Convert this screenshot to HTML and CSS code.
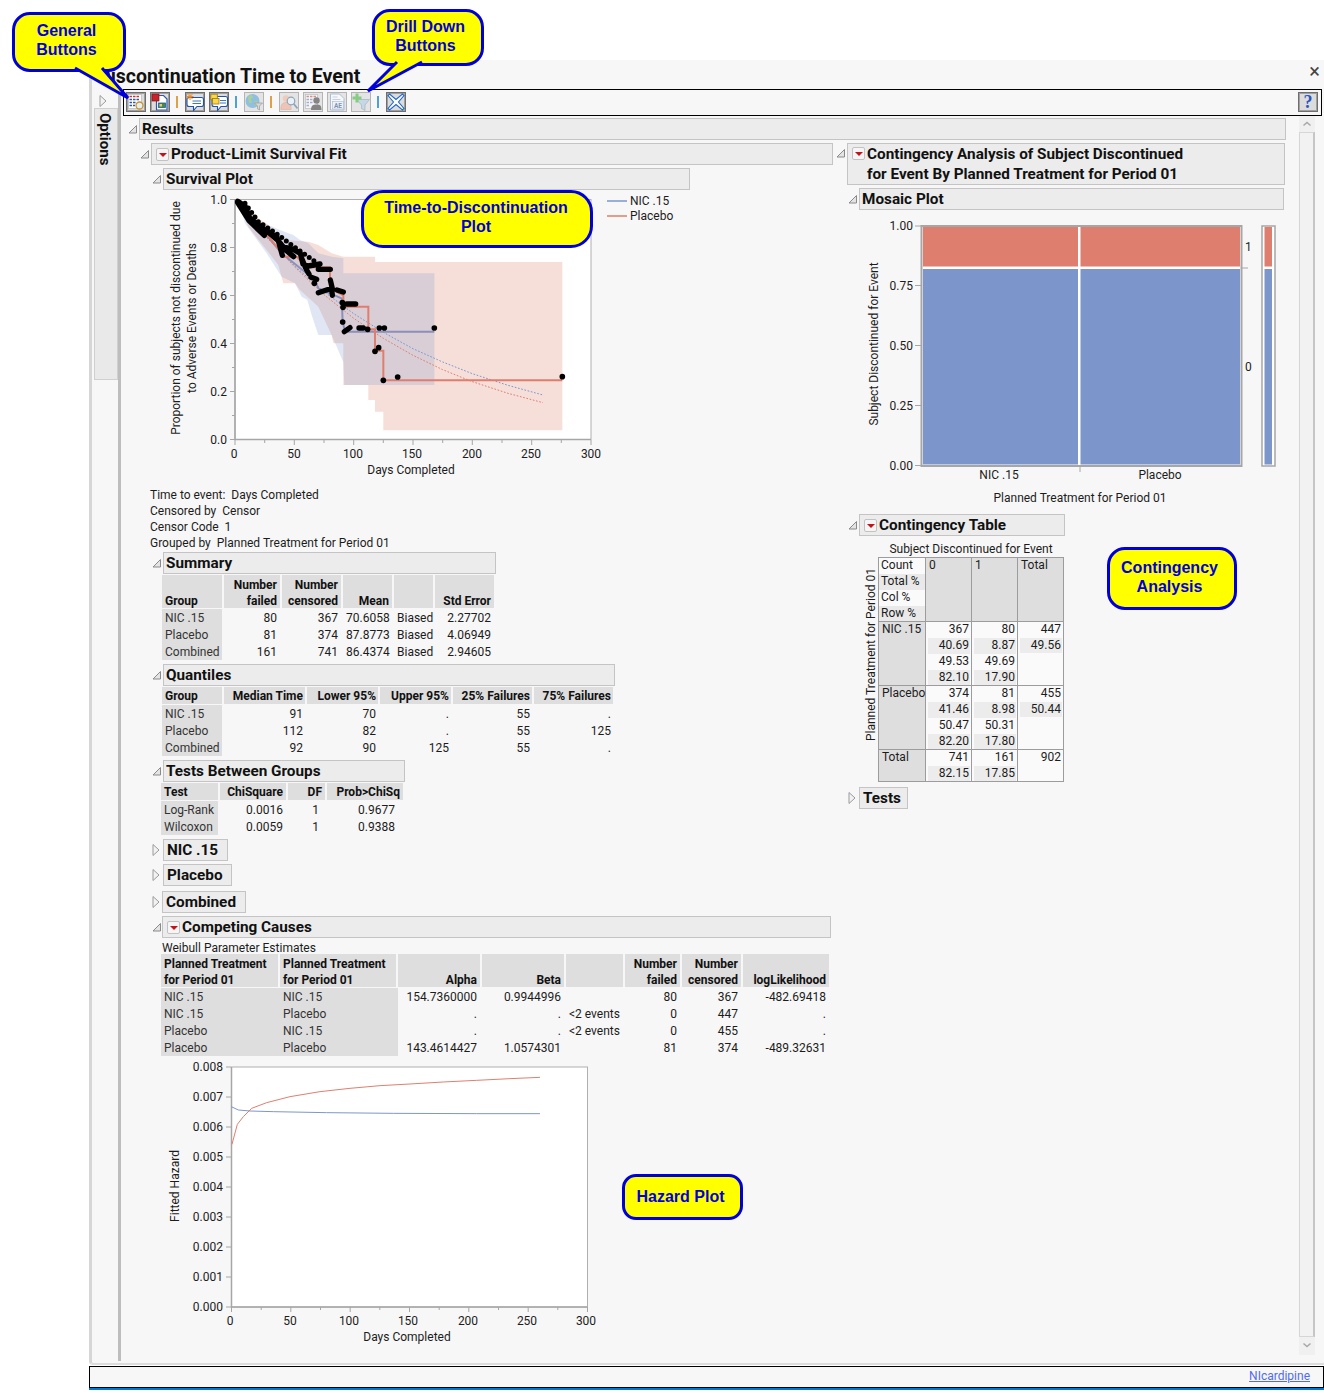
FILE: index.html
```html
<!DOCTYPE html>
<html lang="en">
<head>
<meta charset="utf-8">
<title>Discontinuation Time to Event</title>
<link rel="stylesheet" href="styles.css">
</head>
<body>
<svg class="defs" width="0" height="0" aria-hidden="true">
  <symbol id="tri-open" viewBox="0 0 10 10"><path d="M9.500 1.500V9H2Z" fill="#e4e4e4" stroke="#8a8a8a"/></symbol>
  <symbol id="tri-closed" viewBox="0 0 10 14"><path d="M2 1.500L8 7L2 12.500Z" fill="#f2f2f2" stroke="#9a9a9a"/></symbol>
</svg>
<div class="window">
  <div class="titlebar">
    <h1 class="title">Discontinuation Time to Event</h1>
    <span class="close">&#215;</span>
  </div>
  <div class="frame">
    <aside class="sidebar">
      <svg class="side-tri"><use href="#tri-closed"/></svg>
      <div class="options"><span>Options</span></div>
    </aside>
    <main class="main">
      <div class="toolbar">
        <button class="tb"><svg viewBox="0 0 18 18"><rect x="1.500" y="1.500" width="13" height="14" fill="#fff" stroke="#b0b0b0" stroke-width=".6"/><path d="M2.500 3.500h2.500M6 3.500h2.500M9.500 3.500h2.500" stroke="#c33" stroke-width="1.400"/><path d="M2.500 6.500h2.500M6 6.500h2.500M9.500 6.500h2.500M2.500 9.500h2.500M6 9.500h2.500M2.500 12.500h2.500M6 12.500h2" stroke="#2f58aa" stroke-width="1.600"/><circle cx="12.500" cy="12.500" r="3.500" fill="#dff0f7" stroke="#d08f25" stroke-width="1.300"/></svg></button>
        <button class="tb"><svg viewBox="0 0 18 18"><path d="M5.500 2.500h7l3.500 3.500v11H5.500z" fill="#fff" stroke="#2f58b0" stroke-width="1.200"/><rect x="1" y="1" width="7" height="7" fill="#c8242a" stroke="#7c1518" stroke-width=".7"/><rect x="7.500" y="10" width="7" height="4.500" fill="#3f8f44" stroke="#2a5a9c" stroke-width=".8"/><rect x="8.500" y="11" width="2.500" height="2.500" fill="#f0d24a"/></svg></button>
        <span class="sep sep-o"></span>
        <button class="tb"><svg viewBox="0 0 18 18"><path d="M3 4.500h12.500a2 2 0 0 1 2 2v5a2 2 0 0 1-2 2H11l-3.500 4v-4H3a2 2 0 0 1-2-2v-5a2 2 0 0 1 2-2z" fill="#fff" stroke="#1f54ad" stroke-width="1.100"/><path d="M6.500 8h8.500M6.500 10.500h8.500" stroke="#3f74c6" stroke-width="1.100"/><path d="M4 0v7M.5 3.500h7M1.500 1l5 5M6.500 1l-5 5" stroke="#f08a1a"/></svg></button>
        <button class="tb"><svg viewBox="0 0 18 18"><path d="M4 3.500h11.500a2 2 0 0 1 2 2v6a2 2 0 0 1-2 2H11l-3.500 4v-4H4a2 2 0 0 1-2-2v-6a2 2 0 0 1 2-2z" fill="#fff" stroke="#1f54ad" stroke-width="1.100"/><path d="M10 7.500h6M10 10h6" stroke="#3f74c6" stroke-width="1.100"/><rect x=".8" y="1.200" width="6.500" height="5.500" fill="#f8d84a" stroke="#9c7a10" stroke-width=".8"/><rect x="2.500" y="5.500" width="6.500" height="5.500" fill="#f8d84a" stroke="#9c7a10" stroke-width=".8"/></svg></button>
        <span class="sep sep-b"></span>
        <button class="tb off"><svg viewBox="0 0 18 18"><circle cx="7.500" cy="8" r="7" fill="#8fbfe2"/><path d="M3 4l3-2.500 2.500 2.500-2.500 2 1 3.500-3 1zM9 8.500l3-1 1 3-3 2.500z" fill="#a7d09a"/><path d="M9.500 10h8l-3 3v4l-2-1.200V13z" fill="#d8d8d8" stroke="#9a9a9a" stroke-width=".7"/></svg></button>
        <span class="sep sep-o"></span>
        <button class="tb off"><svg viewBox="0 0 18 18"><circle cx="6" cy="5.500" r="3.200" fill="#f0cbb9"/><path d="M.8 16.500c0-5.500 2-7 5.200-7s5.200 1.500 5.200 7z" fill="#eec4b6" stroke="#d8a898" stroke-width=".5"/><circle cx="11" cy="8" r="3.800" fill="#e8f1f8" stroke="#8ea3b8" stroke-width="1.200"/><path d="M13.700 10.700L17.500 15.500" stroke="#8ea3b8" stroke-width="1.700"/></svg></button>
        <button class="tb off"><svg viewBox="0 0 18 18"><rect x="1.500" y="1.500" width="12" height="14" fill="#f5f5f5" stroke="#b5b5b5" stroke-width=".6"/><path d="M2.500 3.500h2.500M6 3.500h2.500M9.500 3.500h2.500" stroke="#d49090" stroke-width="1.400"/><path d="M2.500 6.500h2.500M6 6.500h2.500M2.500 9.500h2.500M6 9.500h2.500M2.500 12.500h2.500" stroke="#a0b0cc" stroke-width="1.600"/><circle cx="12.500" cy="7.500" r="3.200" fill="#858585"/><path d="M7 17c0-4.500 2-5.500 5.500-5.500s5 1 5 5.500z" fill="#858585"/></svg></button>
        <button class="tb off"><svg viewBox="0 0 18 18"><path d="M2.500 1h9l4.500 4.500V17h-13.500z" fill="#f8f8f8" stroke="#a4b8d3" stroke-width=".9"/><path d="M4.500 4h5M4.500 6.500h8" stroke="#c5d0e1"/><rect x="4.500" y="8.500" width="11" height="7.500" fill="#eef2f7" stroke="#a4b8d3" stroke-width=".6"/><text class="ico-txt" x="10" y="14.500">AE</text></svg></button>
        <button class="tb off"><svg viewBox="0 0 18 18"><path d="M4.500 6.500h13l-4.500 5.500v5.500l-3.500-2V12z" fill="#c6d7e5" stroke="#a4b4c2" stroke-width=".7"/><path d="M5 .5v9M.5 5h9" stroke="#86cc82" stroke-width="3"/></svg></button>
        <span class="sep sep-b"></span>
        <button class="tb"><svg viewBox="0 0 18 18"><path d="M2.500 1l6.500 5.500L15.500 1 17 2.500l-5.500 6.500 5.500 6.500-1.500 1.500L9 11.500 2.500 17 1 15.500 6.500 9 1 2.500z" fill="#fff" stroke="#2268cc" stroke-width="1.100"/></svg></button>
        <button class="tb help">?</button>
      </div>
      <div class="scroller">
        <div class="tree">
          <div class="orow"><svg class="tri"><use href="#tri-open"/></svg><div class="ohead ohead-results">Results</div></div>
          <div class="cols">
            <section class="col-left">
              <div class="orow"><svg class="tri"><use href="#tri-open"/></svg><div class="ohead ohead-pl"><span class="menu"></span>Product-Limit Survival Fit</div></div>
              <div class="ind">
                <div class="orow r-surv"><svg class="tri"><use href="#tri-open"/></svg><div class="ohead w-surv">Survival Plot</div></div>
                <svg class="plot plot-surv" width="540" height="292" viewBox="153 190 540 292">
                  <rect x="235" y="199.500" width="356" height="240" fill="#fff" stroke="#b0b0b0"/>
                  <path d="M235 199.500V439.500H591" fill="none" stroke="#a6a6a6" stroke-width="1.500"/>
                  <path class="tick" d="M230 199.500h5M230 247.500h5M230 295.500h5M230 343.500h5M230 391.500h5M230 439.500h5M232 223.500h3M232 271.500h3M232 319.500h3M232 367.500h3M232 415.500h3M235 440v5M294.300 440v5M353.700 440v5M413 440v5M472.300 440v5M531.700 440v5M591 440v5M264.700 440v3M324 440v3M383.300 440v3M442.700 440v3M502 440v3M561.300 440v3"/>
                  <g transform="translate(225 190) scale(.33333)">
                    <path class="band-r" d="M40 30L100 85L130 105L175 150L250 155L280 165L320 190L355 200H450V216H1012V721H475V665H450V630H430V585H355V460H325L320 435L280 350L225 300L210 280H175L160 225L125 180L70 110Z"/>
                    <path class="band-b" d="M40 30L100 95L130 105L165 120L205 135L225 150L250 160L280 190L320 200L355 205V250H628V585H358L355 517L320 435H280L260 375L247 330L230 320L210 280L170 260L125 190L60 100Z"/>
                    <polyline class="fit fit-b" points="30,28 119,136 208,227 297,305 386,371 475,427 564,476 653,516 742,551 849,586 954,615"/>
                    <polyline class="fit fit-r" points="30,28 119,134 208,230 297,314 386,385 475,445 564,496 653,539 742,575 849,610 954,638"/>
                    <path class="km km-b" d="M40 32L170 190L270 270L280 295L350 325L353 395L360 425H628"/>
                    <path class="km km-r" d="M40 32L180 200H215L245 232H315V265L325 300L355 316V350H430V418H450V482H475V571H1012"/>
                    <path class="dotline" d="M38 34L60 48L74 84L120 120L155 142L166 168L205 178L226 190L234 222L250 228L285 222M38 38L72 92L118 136M122 120L160 152L172 196M150 140L182 180L206 200M230 205L242 234M280 238H316M245 240L252 252M258 262L275 268M316 270L322 296M280 308L320 295L322 316M336 300L355 306M365 342H392M358 425L375 413M402 414H415"/>
                    <path class="dotbumps" d="M60 40L100 95L160 135L200 165L228 185L270 215"/>
                    <g class="pts">
                      <circle cx="268" cy="280"/><circle cx="352" cy="338"/><circle cx="354" cy="352"/><circle cx="353" cy="396"/><circle cx="428" cy="418"/><circle cx="463" cy="414"/><circle cx="478" cy="414"/><circle cx="628" cy="414"/><circle cx="450" cy="484"/><circle cx="461" cy="473"/><circle cx="475" cy="571"/><circle cx="518" cy="561"/><circle cx="1012" cy="560"/>
                    </g>
                  </g>
                  <g class="yl"><text x="227" y="203.500">1.0</text><text x="227" y="251.500">0.8</text><text x="227" y="299.500">0.6</text><text x="227" y="347.500">0.4</text><text x="227" y="395.500">0.2</text><text x="227" y="443.500">0.0</text></g>
                  <g class="xl"><text x="234" y="458">0</text><text x="294" y="458">50</text><text x="353" y="458">100</text><text x="412" y="458">150</text><text x="472" y="458">200</text><text x="531" y="458">250</text><text x="591" y="458">300</text><text x="411" y="474">Days Completed</text></g>
                  <text class="rot" transform="translate(180 318) rotate(-90)">Proportion of subjects not discontinued due</text>
                  <text class="rot" transform="translate(196 318) rotate(-90)">to Adverse Events or Deaths</text>
                  <path d="M607 201h20" stroke="#7c96cc" stroke-width="1.500"/><path d="M607 216h20" stroke="#de7e6e" stroke-width="1.500"/>
                  <text class="lg" x="630" y="205">NIC .15</text><text class="lg" x="630" y="220">Placebo</text>
                </svg>
                <div class="info">
                  <div>Time to event:&nbsp; Days Completed</div>
                  <div>Censored by&nbsp; Censor</div>
                  <div>Censor Code&nbsp; 1</div>
                  <div>Grouped by&nbsp; Planned Treatment for Period 01</div>
                </div>
                <div class="orow r-sum"><svg class="tri"><use href="#tri-open"/></svg><div class="ohead w-sum">Summary</div></div>
                <table class="rep t-sum">
                  <colgroup><col><col><col><col><col><col></colgroup>
                  <thead><tr><th class="l">Group</th><th>Number<br>failed</th><th>Number<br>censored</th><th>Mean</th><th></th><th>Std Error</th></tr></thead>
                  <tbody>
                    <tr><td class="lab">NIC .15</td><td>80</td><td>367</td><td>70.6058</td><td class="l">Biased</td><td>2.27702</td></tr>
                    <tr><td class="lab">Placebo</td><td>81</td><td>374</td><td>87.8773</td><td class="l">Biased</td><td>4.06949</td></tr>
                    <tr><td class="lab">Combined</td><td>161</td><td>741</td><td>86.4374</td><td class="l">Biased</td><td>2.94605</td></tr>
                  </tbody>
                </table>
                <div class="orow r-q"><svg class="tri"><use href="#tri-open"/></svg><div class="ohead w-q">Quantiles</div></div>
                <table class="rep t-q">
                  <colgroup><col><col><col><col><col><col></colgroup>
                  <thead><tr><th class="l">Group</th><th>Median Time</th><th>Lower 95%</th><th>Upper 95%</th><th>25% Failures</th><th>75% Failures</th></tr></thead>
                  <tbody>
                    <tr><td class="lab">NIC .15</td><td>91</td><td>70</td><td>.</td><td>55</td><td>.</td></tr>
                    <tr><td class="lab">Placebo</td><td>112</td><td>82</td><td>.</td><td>55</td><td>125</td></tr>
                    <tr><td class="lab">Combined</td><td>92</td><td>90</td><td>125</td><td>55</td><td>.</td></tr>
                  </tbody>
                </table>
                <div class="orow r-tbg"><svg class="tri"><use href="#tri-open"/></svg><div class="ohead w-tbg">Tests Between Groups</div></div>
                <table class="rep t-tbg">
                  <colgroup><col><col><col><col></colgroup>
                  <thead><tr><th class="l">Test</th><th>ChiSquare</th><th>DF</th><th>Prob&gt;ChiSq</th></tr></thead>
                  <tbody>
                    <tr><td class="lab">Log-Rank</td><td>0.0016</td><td class="c">1</td><td>0.9677</td></tr>
                    <tr><td class="lab">Wilcoxon</td><td>0.0059</td><td class="c">1</td><td>0.9388</td></tr>
                  </tbody>
                </table>
                <div class="orow r-nic"><svg class="tri tri-c"><use href="#tri-closed"/></svg><div class="ohead big w-nic">NIC .15</div></div>
                <div class="orow r-pla"><svg class="tri tri-c"><use href="#tri-closed"/></svg><div class="ohead big w-pla">Placebo</div></div>
                <div class="orow r-com"><svg class="tri tri-c"><use href="#tri-closed"/></svg><div class="ohead big w-com">Combined</div></div>
                <div class="orow r-cc"><svg class="tri"><use href="#tri-open"/></svg><div class="ohead w-cc"><span class="menu"></span>Competing Causes</div></div>
                <div class="weibull">Weibull Parameter Estimates</div>
                <table class="rep t-w">
                  <colgroup><col><col><col><col><col><col><col><col></colgroup>
                  <thead><tr><th class="l">Planned Treatment<br>for Period 01</th><th class="l">Planned Treatment<br>for Period 01</th><th>Alpha</th><th>Beta</th><th></th><th>Number<br>failed</th><th>Number<br>censored</th><th>logLikelihood</th></tr></thead>
                  <tbody>
                    <tr><td class="lab solid">NIC .15</td><td class="lab solid">NIC .15</td><td>154.7360000</td><td>0.9944996</td><td class="l"></td><td>80</td><td>367</td><td>-482.69418</td></tr>
                    <tr><td class="lab solid">NIC .15</td><td class="lab solid">Placebo</td><td>.</td><td>.</td><td class="l">&lt;2 events</td><td>0</td><td>447</td><td>.</td></tr>
                    <tr><td class="lab solid">Placebo</td><td class="lab solid">NIC .15</td><td>.</td><td>.</td><td class="l">&lt;2 events</td><td>0</td><td>455</td><td>.</td></tr>
                    <tr><td class="lab solid">Placebo</td><td class="lab solid">Placebo</td><td>143.4614427</td><td>1.0574301</td><td class="l"></td><td>81</td><td>374</td><td>-489.32631</td></tr>
                  </tbody>
                </table>
                <svg class="plot plot-haz" width="540" height="288" viewBox="153 1057 540 288">
                  <rect x="231.500" y="1067" width="356" height="240" fill="#fff" stroke="#b0b0b0"/>
                  <path d="M231.500 1067V1307H587.500" fill="none" stroke="#a6a6a6" stroke-width="1.500"/>
                  <path class="tick" d="M226 1067h5M226 1097h5M226 1127h5M226 1157h5M226 1187h5M226 1217h5M226 1247h5M226 1277h5M226 1307h5M231.500 1307v5M290.800 1307v5M350.200 1307v5M409.500 1307v5M468.800 1307v5M528.200 1307v5M587.500 1307v5M261.200 1307v3M320.500 1307v3M379.800 1307v3M439.200 1307v3M498.500 1307v3M557.800 1307v3"/>
                  <g transform="translate(160 1055) scale(.33333)">
                    <polyline class="haz haz-b" points="214,155 235,165 270,168 340,170 500,173 700,175 950,176 1140,176"/>
                    <polyline class="haz haz-r" points="216,268 232,208 250,185 275,160 320,143 390,125 480,110 570,100 660,92 750,87 850,81 950,76 1050,71 1140,67"/>
                  </g>
                  <g class="yl"><text x="223" y="1071">0.008</text><text x="223" y="1101">0.007</text><text x="223" y="1131">0.006</text><text x="223" y="1161">0.005</text><text x="223" y="1191">0.004</text><text x="223" y="1221">0.003</text><text x="223" y="1251">0.002</text><text x="223" y="1281">0.001</text><text x="223" y="1311">0.000</text></g>
                  <g class="xl"><text x="230" y="1325">0</text><text x="290" y="1325">50</text><text x="349" y="1325">100</text><text x="408" y="1325">150</text><text x="468" y="1325">200</text><text x="527" y="1325">250</text><text x="586" y="1325">300</text><text x="407" y="1341">Days Completed</text></g>
                  <text class="rot" transform="translate(179 1186) rotate(-90)">Fitted Hazard</text>
                </svg>
              </div>
            </section>
            <section class="col-right">
              <div class="orow r-ca"><svg class="tri"><use href="#tri-open"/></svg><div class="ohead ohead-ca"><span class="menu"></span><div>Contingency Analysis of Subject Discontinued<br>for Event By Planned Treatment for Period 01</div></div></div>
              <div class="ind-r">
                <div class="orow r-mos"><svg class="tri"><use href="#tri-open"/></svg><div class="ohead w-mos">Mosaic Plot</div></div>
                <svg class="plot plot-mos" width="441" height="302" viewBox="849 210 441 302">
                  <rect x="921.500" y="226" width="320" height="240" fill="#fff" stroke="#a6a6a6" stroke-width="2"/>
                  <rect x="923" y="227" width="155" height="39.500" fill="#de7e6e"/><rect x="1080.500" y="227" width="159.500" height="39.500" fill="#de7e6e"/>
                  <rect x="923" y="269" width="155" height="195.500" fill="#7c96cc"/><rect x="1080.500" y="269" width="159.500" height="195.500" fill="#7c96cc"/>
                  <rect x="1262" y="226" width="13" height="240" fill="#fff" stroke="#a6a6a6" stroke-width="1.500"/>
                  <rect x="1264.500" y="227" width="7.500" height="39.500" fill="#de7e6e"/><rect x="1264.500" y="269" width="7.500" height="195.500" fill="#7c96cc"/>
                  <path class="tick" d="M915 226h6M915 285.500h6M915 345.500h6M915 405.500h6M915 465.500h6M1080 466v6M1242 268h6"/>
                  <g class="yl"><text x="913" y="230">1.00</text><text x="913" y="289.500">0.75</text><text x="913" y="349.500">0.50</text><text x="913" y="409.500">0.25</text><text x="913" y="469.500">0.00</text></g>
                  <g class="xl"><text x="999" y="479">NIC .15</text><text x="1160" y="479">Placebo</text><text x="1080" y="502">Planned Treatment for Period 01</text></g>
                  <text class="lg" x="1245" y="251">1</text><text class="lg" x="1245" y="371">0</text>
                  <text class="rot" transform="translate(878 344) rotate(-90)">Subject Discontinued for Event</text>
                </svg>
                <div class="orow r-ct"><svg class="tri"><use href="#tri-open"/></svg><div class="ohead w-ct"><span class="menu"></span>Contingency Table</div></div>
                <div class="ct-caption">Subject Discontinued for Event</div>
                <div class="ct-wrap">
                  <div class="ct-vlabel"><span>Planned Treatment for Period 01</span></div>
                  <table class="ct">
                    <colgroup><col><col><col><col></colgroup>
                    <tr class="row-h">
                      <td class="corner"><div class="st">Count</div><div class="st alt">Total %</div><div class="st">Col %</div><div class="st alt">Row %</div></td>
                      <td class="hd">0</td><td class="hd">1</td><td class="hd">Total</td>
                    </tr>
                    <tr>
                      <td class="hd">NIC .15</td>
                      <td><div class="ln">367</div><div class="ln alt">40.69</div><div class="ln">49.53</div><div class="ln alt">82.10</div></td>
                      <td><div class="ln">80</div><div class="ln alt">8.87</div><div class="ln">49.69</div><div class="ln alt">17.90</div></td>
                      <td><div class="ln">447</div><div class="ln alt">49.56</div></td>
                    </tr>
                    <tr>
                      <td class="hd">Placebo</td>
                      <td><div class="ln">374</div><div class="ln alt">41.46</div><div class="ln">50.47</div><div class="ln alt">82.20</div></td>
                      <td><div class="ln">81</div><div class="ln alt">8.98</div><div class="ln">50.31</div><div class="ln alt">17.80</div></td>
                      <td><div class="ln">455</div><div class="ln alt">50.44</div></td>
                    </tr>
                    <tr>
                      <td class="hd">Total</td>
                      <td><div class="ln">741</div><div class="ln alt">82.15</div></td>
                      <td><div class="ln">161</div><div class="ln alt">17.85</div></td>
                      <td><div class="ln">902</div></td>
                    </tr>
                  </table>
                </div>
                <div class="orow r-tests"><svg class="tri tri-c"><use href="#tri-closed"/></svg><div class="ohead big w-tests">Tests</div></div>
              </div>
            </section>
          </div>
        </div>
        <div class="scrollbar">
          <div class="sb-btn"><svg viewBox="0 0 16 16"><path d="M4.500 9.500L8 6.500l3.500 3" fill="none" stroke="#a8a8a8" stroke-width="1.500"/></svg></div>
          <div class="sb-thumb"></div>
          <div class="sb-btn"><svg viewBox="0 0 16 16"><path d="M4.500 6.500L8 9.500l3.500-3" fill="none" stroke="#a8a8a8" stroke-width="1.500"/></svg></div>
        </div>
      </div>
    </main>
  </div>
</div>
<footer class="status"><a class="link" href="#">NIcardipine</a></footer>

<div class="callout c-general">General<br>Buttons
  <svg class="tail" width="120" height="90"><path d="M60 53L113 83L87 53" fill="#ff0" stroke="#00d" stroke-width="3"/></svg>
</div>
<div class="callout c-drill">Drill Down<br>Buttons
  <svg class="tail" width="60" height="85"><path d="M22 50L-7 79L47 50" fill="#ff0" stroke="#00d" stroke-width="3"/></svg>
</div>
<div class="callout c-time">Time-to-Discontinuation<br>Plot</div>
<div class="callout c-cont">Contingency<br>Analysis</div>
<div class="callout c-haz">Hazard Plot</div>
</body>
</html>
```
FILE: styles.css
```css
* { box-sizing: border-box; }
html, body { margin: 0; padding: 0; }
body {
  position: relative;
  width: 1324px;
  height: 1397px;
  overflow: hidden;
  background: #fff;
  font-family: Roboto, "Liberation Sans", sans-serif;
  font-size: 12px;
  color: #1c1c1c;
}
.defs { position: absolute; }

.window {
  margin: 60px 0 0 89px;
  width: 1235px;
  height: 1305px;
  background: #f7f7f7;
  border-left: 3px solid #d6d6d6;
  border-bottom: 2px solid #dcdcdc;
  border-bottom-left-radius: 4px;
  display: flex;
  flex-direction: column;
}
.titlebar {
  height: 29px;
  flex: none;
  display: flex;
  align-items: center;
  justify-content: space-between;
}
.title { margin: 4px 0 0 6px; font-size: 19.5px; font-weight: 700; color: #111; line-height: 26px; }
.close { font-size: 20px; color: #444; margin-right: 4px; line-height: 20px; margin-top: -8px; }

.frame { flex: 1; display: flex; min-height: 0; }
.sidebar {
  width: 29px;
  flex: none;
  border-right: 3px solid #bdbdbd;
  margin-bottom: 2px;
  padding: 5px 0 0 2px;
}
.side-tri { display: block; width: 10px; height: 14px; margin-left: 4px; }
.options {
  width: 24px;
  height: 272px;
  background: #e9e9e9;
  border: 1px solid #cfcfcf;
  display: flex;
  justify-content: center;
  padding: 4px 2px 0 0;
}
.options span { writing-mode: vertical-rl; font-weight: 700; font-size: 15px; color: #111; }

.main { flex: 1; min-width: 0; display: flex; flex-direction: column; padding-left: 2px; }
.toolbar {
  height: 27px;
  flex: none;
  margin-right: 2px;
  border: 1px solid #000;
  display: flex;
  align-items: center;
  padding: 0 3px 1px 2px;
  background: #f7f7f7;
}
.tb {
  width: 20px;
  height: 20px;
  padding: 0;
  border: 1px solid #6e6e6e;
  box-shadow: inset 0 0 0 1px #a0a0a0;
  background: #dcdcdc;
  display: flex;
  align-items: center;
  justify-content: center;
  flex: none;
}
.tb svg { width: 18px; height: 18px; display: block; flex: none; }
.tb + .tb { margin-left: 4px; }
.tb.off { border-color: #b4b4b4; box-shadow: none; background: #e4e4e4; }
.ico-txt { font: 700 6.5px Roboto, sans-serif; fill: #7e93b3; text-anchor: middle; }
.tb.help {
  margin-left: auto;
  font: 700 18px/18px "Liberation Serif", serif;
  color: #2a56c0;
}
.sep { width: 2px; height: 12px; margin: 0 7px 0 6px; flex: none; }
.sep-o { background: #e0a04a; }
.sep-b { background: #4f9fdc; }

.scroller { flex: 1; display: flex; min-height: 0; padding: 1px 0 0 4px; }
.tree { width: 1172px; flex: none; padding-top: 1px; }
.orow { display: flex; align-items: center; }
.tri { width: 10px; height: 10px; flex: none; margin-right: 2px; }
.tri-c { height: 14px; }
.ohead {
  height: 22px;
  border: 1px solid #c4c4c4;
  background: #ececec;
  font-weight: 700;
  font-size: 15.3px;
  line-height: 20px;
  padding-left: 2px;
  color: #111;
  display: flex;
  align-items: center;
  flex: none;
}
.ohead.big { padding-left: 3px; }
.ohead-results { width: 1147px; }
.menu {
  width: 13px;
  height: 13px;
  margin: 0 2px 0 2px;
  flex: none;
  border: 1px solid #c2c2c2;
  border-radius: 2px;
  background: #f5f5f5;
  position: relative;
}
.menu::after {
  content: "";
  position: absolute;
  left: 2px;
  top: 4px;
  border: 4px solid transparent;
  border-top: 4px solid #c4121a;
  border-bottom: 0;
}

.cols { display: flex; margin: 3px 0 0 12px; }
.col-left { width: 696px; flex: none; }
.ohead-pl { width: 682px; }
.ind { margin-left: 12px; }
.r-surv { margin-top: 3px; }
.w-surv { width: 527px; }
.plot { display: block; }
.plot-surv, .plot-haz { margin-left: 2px; }
.plot-haz { margin-top: 1px; }
.info { margin: 5px 0 0 -1px; line-height: 16px; }
.r-sum { margin-top: 1px; }
.w-sum { width: 333px; }
.r-q { margin-top: 4px; }
.w-q { width: 452px; }
.r-tbg { margin-top: 4px; }
.w-tbg { width: 242px; }
.r-nic { margin-top: 4px; }
.w-nic { width: 65px; }
.r-pla { margin-top: 3px; }
.w-pla { width: 69px; }
.r-com { margin-top: 5px; }
.r-com .tri, .r-cc .tri { margin-right: 1px; }
.w-com { width: 84px; }
.r-cc { margin-top: 3px; }
.w-cc { width: 669px; }
.weibull { margin: 2px 0 0 11px; line-height: 16px; height: 15px; }

.rep { border-collapse: separate; border-spacing: 0; table-layout: fixed; margin: 0 0 0 11px; }
.rep th, .rep td {
  text-align: right;
  white-space: nowrap;
  border-right: 2px solid transparent;
  background-clip: padding-box;
}
.rep th {
  padding: 2px 3px 0;
  background-color: #dedede;
  font-weight: 700;
  line-height: 16px;
  vertical-align: bottom;
  border-top: 1px solid transparent;
  box-shadow: inset 0 -1px #f7f7f7;
  color: #111;
}
.rep td { padding: 1px 3px 0; line-height: 16px; height: 17px; }
.rep th.l, .rep td.l { text-align: left; }
.rep td.c { padding-right: 6px; }
.rep td.lab { background-color: #dedede; text-align: left; color: #333; }
.rep td.lab.solid { border-right: 0; }
.t-sum { width: 334px; }
.t-sum col:nth-child(1) { width: 62px; }
.t-sum col:nth-child(2) { width: 58px; }
.t-sum col:nth-child(3) { width: 61px; }
.t-sum col:nth-child(4) { width: 51px; }
.t-sum col:nth-child(5) { width: 41px; }
.t-sum col:nth-child(6) { width: 61px; }
.t-q { width: 453px; }
.t-q th, .t-tbg th { padding-top: 1px; padding-bottom: 1px; }
.t-q th, .t-q td { padding-right: 2px; }
.t-q col:nth-child(1) { width: 62px; }
.t-q col:nth-child(2) { width: 83px; }
.t-q col:nth-child(3) { width: 73px; }
.t-q col:nth-child(4) { width: 73px; }
.t-q col:nth-child(5) { width: 81px; }
.t-q col:nth-child(6) { width: 81px; }
.t-tbg { width: 244px; margin-left: 10px; }
.t-tbg td:last-child { padding-right: 8px; }
.t-tbg col:nth-child(1) { width: 59px; }
.t-tbg col:nth-child(2) { width: 68px; }
.t-tbg col:nth-child(3) { width: 39px; }
.t-tbg col:nth-child(4) { width: 78px; }
.t-w { width: 670px; margin: -2px 0 0 10px; }
.t-w col:nth-child(1) { width: 119px; }
.t-w col:nth-child(2) { width: 118px; }
.t-w col:nth-child(3) { width: 84px; }
.t-w col:nth-child(4) { width: 84px; }
.t-w col:nth-child(5) { width: 59px; }
.t-w col:nth-child(6) { width: 57px; }
.t-w col:nth-child(7) { width: 61px; }
.t-w col:nth-child(8) { width: 88px; }

.plot text { font-size: 12px; fill: #1c1c1c; font-family: Roboto, "Liberation Sans", sans-serif; }
.yl text { text-anchor: end; }
.xl text { text-anchor: middle; }
.rot { text-anchor: middle; }
.tick { stroke: #a6a6a6; fill: none; }
.band-r { fill: #de7e6e; fill-opacity: .26; }
.band-b { fill: #7c96cc; fill-opacity: .24; }
.fit { fill: none; stroke-width: 3; stroke-dasharray: 5 5; }
.fit-b { stroke: #7c96cc; }
.fit-r { stroke: #de7e6e; }
.km { fill: none; stroke-width: 6; }
.km-b { stroke: #8b8fbb; }
.km-r { stroke: #de7e6e; }
.dotline { fill: none; stroke: #000; stroke-width: 16; stroke-linecap: round; stroke-linejoin: round; }
.dotbumps { fill: none; stroke: #000; stroke-width: 15; stroke-linecap: round; stroke-dasharray: 0 17; }
.pts circle { fill: #000; r: 8.5px; }
.haz { fill: none; stroke-width: 3; }
.haz-b { stroke: #7c96cc; }
.haz-r { stroke: #de7e6e; }

.col-right { width: 450px; flex: none; }
.r-ca { align-items: flex-start; }
.r-ca .tri { margin-top: 5px; }
.ohead-ca { width: 438px; height: 42px; align-items: flex-start; padding: 0 0 0 2px; }
.ohead-ca .menu { margin-top: 3px; }
.ohead-ca div { line-height: 20px; }
.ind-r { margin-left: 12px; }
.r-mos { margin-top: 3px; }
.w-mos { width: 425px; }
.plot-mos { margin-left: 2px; }
.r-ct { margin-top: 2px; }
.w-ct { width: 206px; }
.ct-caption { margin: 5px 0 0 32px; width: 184px; height: 16px; line-height: 16px; text-align: center; white-space: nowrap; }
.ct-wrap { display: flex; margin-left: 15px; }
.ct-vlabel { width: 16px; flex: none; display: flex; justify-content: flex-end; align-items: flex-start; padding: 11px 0 0 0; }
.ct-vlabel span { writing-mode: vertical-rl; transform: rotate(180deg); white-space: nowrap; }
.ct { border-collapse: collapse; table-layout: fixed; width: 186px; }
.ct col:nth-child(1) { width: 47px; }
.ct col:nth-child(2), .ct col:nth-child(3), .ct col:nth-child(4) { width: 46px; }
.ct td { border: 1px solid #9c9c9c; padding: 0; vertical-align: top; background: #fafafa; line-height: 14px; }
.ct td.hd { background: #dedede; padding-left: 3px; }
.ct td.corner { background: #fafafa; }
.st { height: 16px; padding-left: 2px; white-space: nowrap; }
.st:last-child { height: 15px; }
.st.alt { background: #e9e9e9; }
.ln { height: 16px; text-align: right; padding-right: 2px; margin-left: 2px; }
.ln:last-child { height: 15px; }
.ln.alt { background: #ececec; margin-right: 1px; padding-right: 1px; }
.r-tests { margin-top: 5px; }
.w-tests { width: 49px; }

.scrollbar { width: 16px; margin: -1px 0 8px 0; display: flex; flex-direction: column; flex: none; }
.sb-btn { height: 16px; background: #f0f0f0; flex: none; }
.sb-btn:last-child { height: 18px; }
.sb-btn svg { display: block; width: 16px; height: 16px; }
.sb-thumb { flex: 1; background: #f2f2f2; border: 1px solid #d6d6d6; border-right: 2px solid #c6c6c6; }

.status {
  margin: 1px 0 0 89px;
  width: 1235px;
  height: 22px;
  border: 1px solid #000;
  box-shadow: 0 2px 0 #0078d7;
  background: #f7f7f7;
  text-align: right;
  padding-right: 13px;
  line-height: 19px;
}
.link { color: #4f6bf0; text-decoration: underline; }

.callout {
  position: absolute;
  background: #ff0;
  border: 3px solid #00d;
  border-radius: 18px;
  color: #00d;
  font: 700 16px/19px "Liberation Sans", Arial, sans-serif;
  text-align: center;
  z-index: 5;
}
.tail { position: absolute; left: 0; top: 0; overflow: visible; pointer-events: none; }
.c-general { left: 12px; top: 12px; width: 114px; height: 60px; padding: 6px 5px 0 0; }
.c-drill { left: 372px; top: 9px; width: 112px; height: 57px; padding: 5px 5px 0 0; }
.c-time { left: 361px; top: 190px; width: 232px; height: 58px; padding: 5px 2px 0 0; border-radius: 22px; }
.c-cont { left: 1107px; top: 547px; width: 130px; height: 63px; padding: 8px 5px 0 0; }
.c-haz { left: 622px; top: 1174px; width: 121px; height: 46px; padding: 10px 4px 0 0; border-radius: 14px; }
```
